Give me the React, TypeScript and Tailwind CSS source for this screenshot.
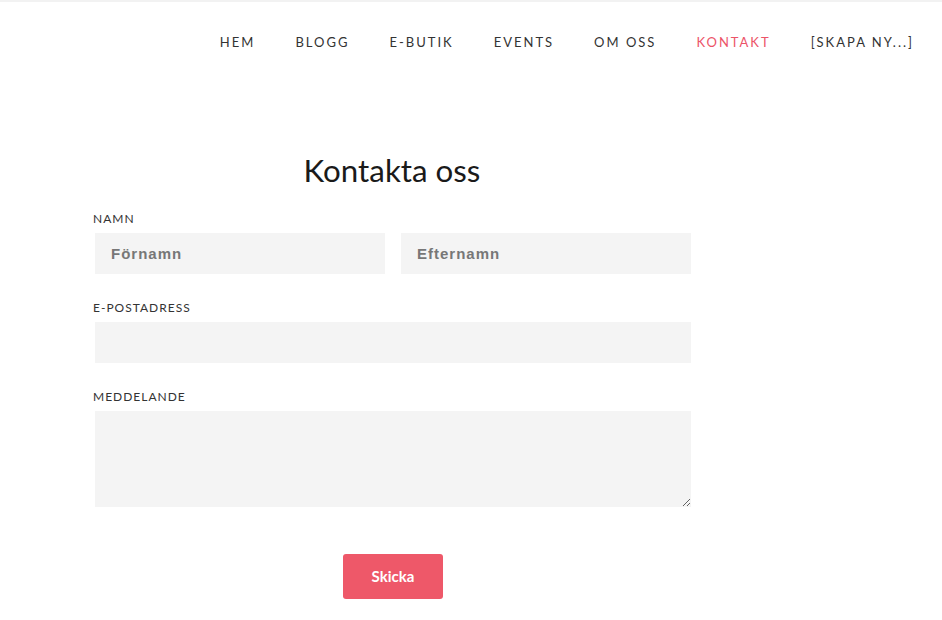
import React from "react";

const navItems = ["HEM", "BLOGG", "E-BUTIK", "EVENTS", "OM OSS", "KONTAKT", "[SKAPA NY...]"];

export default function App() {
  return (
    <div className="min-h-[620px] w-full bg-white" style={{ fontFamily: "Lato, 'Open Sans', sans-serif" }}>
      <div className="h-[2px] w-full bg-[#f2f2f2]" />
      <nav className="flex h-[80px] items-center justify-end gap-[40px] pr-[28px]">
        {navItems.map((item) => (
          <a
            key={item}
            className={`text-[13px] leading-none tracking-[2px] ${item === "KONTAKT" ? "text-[#ec5468]" : "text-[#333]"}`}
          >
            {item}
          </a>
        ))}
      </nav>
      <div className="ml-[93px] w-[598px]">
        <h1 className="mt-[68px] text-center text-[31.3px] leading-[40px] text-[#1a1a1a]">Kontakta oss</h1>
        <div className="mt-[21px] text-[12px] leading-[16px] tracking-[1px] text-[#333]">NAMN</div>
        <div className="ml-[2px] mt-[6px] flex gap-[16px]">
          <input
            placeholder="Förnamn"
            className="h-[41px] w-[290px] bg-[#f4f4f4] px-[16px] text-[15px] font-semibold tracking-[1px] text-[#333] outline-none placeholder:text-[#777]"
            style={{ fontFamily: "'Liberation Sans', sans-serif" }}
          />
          <input
            placeholder="Efternamn"
            className="h-[41px] w-[290px] bg-[#f4f4f4] px-[16px] text-[15px] font-semibold tracking-[1px] text-[#333] outline-none placeholder:text-[#777]"
            style={{ fontFamily: "'Liberation Sans', sans-serif" }}
          />
        </div>
        <div className="mt-[26px] text-[12px] leading-[16px] tracking-[1px] text-[#333]">E-POSTADRESS</div>
        <input className="ml-[2px] mt-[6px] block h-[41px] w-[596px] bg-[#f4f4f4] px-[16px] outline-none" />
        <div className="mt-[26px] text-[12px] leading-[16px] tracking-[1px] text-[#333]">MEDDELANDE</div>
        <textarea className="ml-[2px] mt-[6px] block h-[96px] w-[596px] resize-y bg-[#f4f4f4] px-[16px] py-[10px] outline-none" />
        <div className="mt-[47px] flex justify-center pl-[2px]">
          <button className="h-[45px] w-[100px] rounded-[3px] bg-[#ee5869] text-[15px] font-bold text-white">
            Skicka
          </button>
        </div>
      </div>
    </div>
  );
}
